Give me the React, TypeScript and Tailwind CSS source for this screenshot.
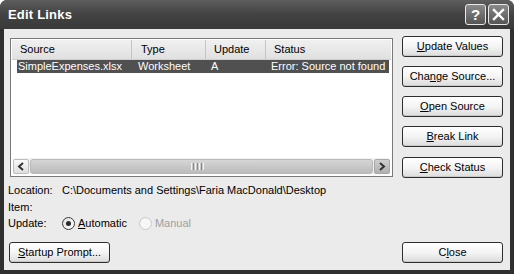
import React from "react";

const font = { fontFamily: '"Liberation Sans", Arial, sans-serif' };

function Btn({ children, className = "" }: { children: React.ReactNode; className?: string }) {
  return (
    <div
      className={
        "h-[21px] w-[101px] flex items-center justify-center rounded-[3px] border border-[#2e2e2e] bg-gradient-to-b from-[#ffffff] via-[#f4f4f4] to-[#dcdcdc] text-[11px] text-black shadow-[inset_0_-1px_0_#c8c8c8] " +
        className
      }
    >
      {children}
    </div>
  );
}

function TitleButton({ children }: { children: React.ReactNode }) {
  return (
    <div className="w-[21px] h-[21px] rounded-[3px] border border-[#e8e8e8] bg-gradient-to-b from-[#8a8a8a] to-[#555555] flex items-center justify-center text-white">
      {children}
    </div>
  );
}

export default function App() {
  return (
    <div className="w-[514px] h-[274px] bg-[#ffffff]" style={font}>
      <div className="w-[514px] h-[274px] flex flex-col rounded-t-[7px] bg-[#2f2f2f] overflow-hidden">
        {/* Title bar */}
        <div className="h-[29px] flex items-center px-[8px] bg-gradient-to-b from-[#5e5e5e] via-[#424242] to-[#3a3a3a]">
          <span className="text-white font-bold text-[13px] tracking-[0.2px] flex-1">Edit Links</span>
          <div className="flex gap-[2px] mr-[-3px]">
            <TitleButton>
              <span className="font-bold text-[15px] leading-none">?</span>
            </TitleButton>
            <TitleButton>
              <svg width="13" height="13" viewBox="0 0 13 13">
                <path d="M2 2 L11 11 M11 2 L2 11" stroke="#fff" strokeWidth="2.4" strokeLinecap="square" />
              </svg>
            </TitleButton>
          </div>
        </div>

        {/* Body */}
        <div className="mx-[4px] mb-[4px] flex-1 bg-[#ebebeb] flex flex-col">
          <div className="flex pt-[7px] pl-[6px]">
            {/* Left: list + info */}
            <div className="flex flex-col">
              <div className="mt-[2px] w-[383px] h-[139px] border border-[#7a7a7a] bg-white flex flex-col p-[1px]">
                {/* header */}
                <div className="h-[20px] flex items-center text-[11px] text-black bg-gradient-to-b from-[#f0f0f0] to-[#e0e0e0] border-b border-[#cfcfcf]">
                  <div className="w-[120px] pl-[8px] h-full flex items-center border-r border-[#c4c4c4]">Source</div>
                  <div className="w-[74px] pl-[9px] h-full flex items-center border-r border-[#c4c4c4]">Type</div>
                  <div className="w-[60px] pl-[8px] h-full flex items-center border-r border-[#c4c4c4]">Update</div>
                  <div className="pl-[8px]">Status</div>
                </div>
                {/* selected row */}
                <div className="ml-[5px] mr-[2px] h-[13px] flex items-center bg-[#505050] text-white text-[11px] leading-none">
                  <div className="w-[116px] pl-[1px]">SimpleExpenses.xlsx</div>
                  <div className="w-[78px] pl-[5px]">Worksheet</div>
                  <div className="w-[60px]">A</div>
                  <div>Error: Source not found</div>
                </div>
                <div className="flex-1" />
                {/* horizontal scrollbar */}
                <div className="h-[16px] mb-[1px] mx-[1px] flex items-center bg-[#f2f2f2]">
                  <div className="w-[16px] h-[15px] rounded-[2px] border border-[#bdbdbd] bg-gradient-to-b from-[#fafafa] to-[#dedede] flex items-center justify-center">
                    <svg width="8" height="9" viewBox="0 0 8 9">
                      <path d="M6 1 L2 4.5 L6 8" stroke="#333" strokeWidth="2" fill="none" />
                    </svg>
                  </div>
                  <div className="flex-1 h-[15px] mx-[1px] rounded-[3px] border border-[#b8b8b8] bg-gradient-to-b from-[#d6d6d6] via-[#c8c8c8] to-[#bcbcbc] flex items-center justify-center">
                    <div className="flex gap-[1px] ml-[-8px]">
                      <div className="w-[1px] h-[7px] bg-[#f4f4f4]" />
                      <div className="w-[1px] h-[7px] bg-[#8a8a8a]" />
                      <div className="w-[1px] h-[7px] bg-[#f4f4f4]" />
                      <div className="w-[1px] h-[7px] bg-[#8a8a8a]" />
                      <div className="w-[1px] h-[7px] bg-[#f4f4f4]" />
                      <div className="w-[1px] h-[7px] bg-[#8a8a8a]" />
                      <div className="w-[1px] h-[7px] bg-[#f4f4f4]" />
                    </div>
                  </div>
                  <div className="w-[16px] h-[15px] rounded-[2px] border border-[#a8a8a8] bg-gradient-to-b from-[#cfcfcf] to-[#b0b0b0] flex items-center justify-center">
                    <svg width="8" height="9" viewBox="0 0 8 9">
                      <path d="M2 1 L6 4.5 L2 8" stroke="#333" strokeWidth="2" fill="none" />
                    </svg>
                  </div>
                </div>
              </div>

              {/* Info lines */}
              <div className="mt-[5px] ml-[-2px] text-[11px] text-black leading-[16.5px]">
                <div className="flex">
                  <span className="w-[54px]">Location:</span>
                  <span>C:\Documents and Settings\Faria MacDonald\Desktop</span>
                </div>
                <div>Item:</div>
                <div className="flex items-center">
                  <span className="w-[54px]">Update:</span>
                  <div className="w-[13px] h-[13px] rounded-full border border-[#3a3a3a] bg-gradient-to-br from-[#e0e0e0] to-white flex items-center justify-center">
                    <div className="w-[5px] h-[5px] rounded-full bg-[#2a2a2a]" />
                  </div>
                  <span className="ml-[3px]">
                    <span className="underline">A</span>utomatic
                  </span>
                  <div className="ml-[12px] w-[13px] h-[13px] rounded-full border border-[#c8c8c8] bg-[#f6f6f6]" />
                  <span className="ml-[3px] text-[#a0a0a0]">Manual</span>
                </div>
              </div>
            </div>

            {/* Right buttons */}
            <div className="ml-[9px] flex flex-col gap-[9px]">
              <Btn>
                <span>
                  <span className="underline">U</span>pdate Values
                </span>
              </Btn>
              <Btn>
                <span>
                  Cha<span className="underline">n</span>ge Source...
                </span>
              </Btn>
              <Btn>
                <span>
                  <span className="underline">O</span>pen Source
                </span>
              </Btn>
              <Btn>
                <span>
                  <span className="underline">B</span>reak Link
                </span>
              </Btn>
              <Btn className="mt-[1px]">
                <span>
                  <span className="underline">C</span>heck Status
                </span>
              </Btn>
            </div>
          </div>

          <div className="flex-1" />

          {/* Bottom buttons */}
          <div className="flex justify-between pl-[5px] pr-[7px] mb-[7px]">
            <Btn>
              <span>
                <span className="underline">S</span>tartup Prompt...
              </span>
            </Btn>
            <Btn>
              <span>
                C<span className="underline">l</span>ose
              </span>
            </Btn>
          </div>
        </div>
      </div>
    </div>
  );
}
